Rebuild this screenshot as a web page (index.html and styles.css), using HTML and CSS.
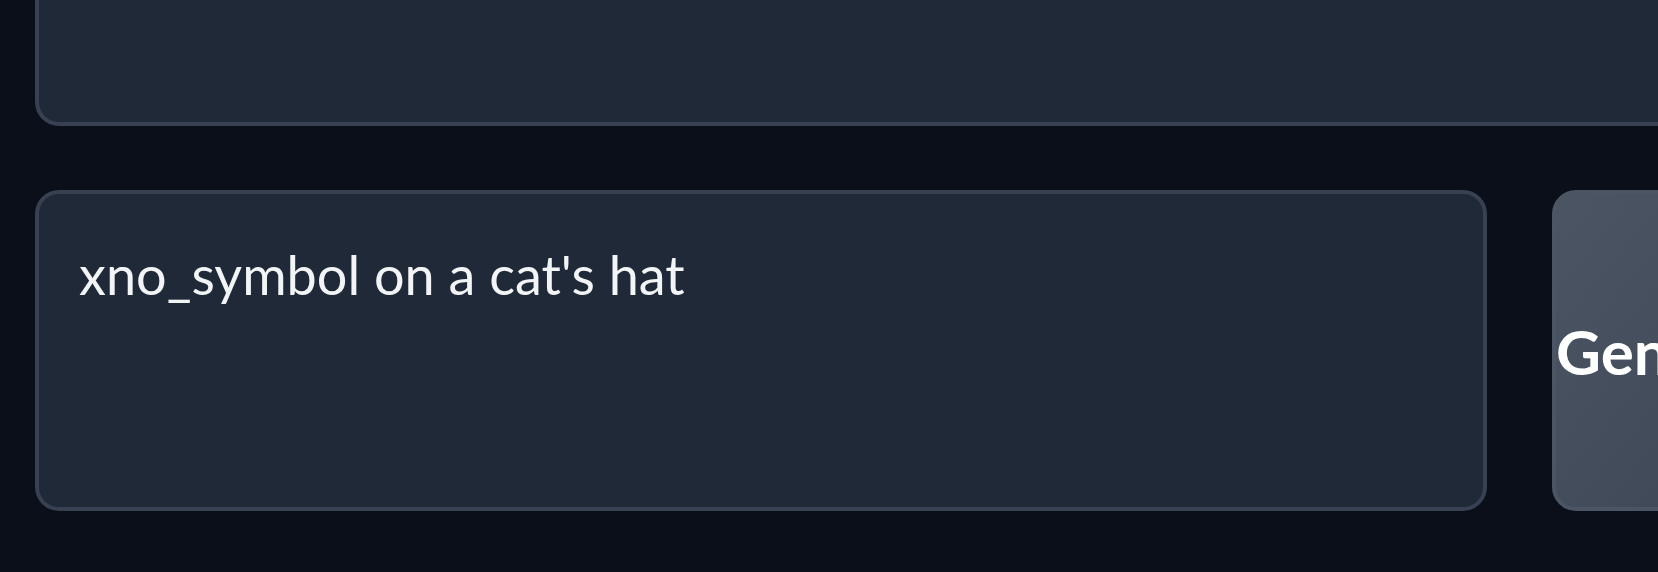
FILE: index.html
```html
<!DOCTYPE html>
<html lang="en">
<head>
    <meta charset="UTF-8">
    <title>prompt</title>
    <link rel="stylesheet" href="styles.css">
</head>
<body>
<div class="app">
    <div class="panel"></div>
    <div class="prompt-row">
        <div class="prompt-box">
            <textarea class="prompt-input" rows="3">xno_symbol on a cat's hat</textarea>
        </div>
        <button class="btn-generate">Generate</button>
    </div>
</div>
</body>
</html>
```

FILE: styles.css
```css
body{
    margin:0;
    padding:0;
    background:#0b0f19;
    font-family: Lato, "Noto Sans", sans-serif;
    overflow: hidden;
}

.app{
    width:1800px;
    padding-left:35px;
    display:flex;
    flex-direction:column;
    gap:64px;
}

.panel{
    height:122px;
    background:#1f2937;
    border:4px solid #374151;
    border-top:none;
    border-radius:0 0 24px 24px;
}

.prompt-row{
    display:flex;
    gap:65px;
    height:321px;
}

.prompt-box{
    width:1452px;
    box-sizing:border-box;
    background:#1f2937;
    border:4px solid #374151;
    border-radius:24px;
    padding:43px 40px 30px;
}

.prompt-input{
    display:block;
    width:100%;
    height:100%;
    margin:0;
    padding:0;
    border:none;
    outline:none;
    resize:none;
    background:transparent;
    color:#f3f4f6;
    font-family: Lato, "Noto Sans", sans-serif;
    font-size:54px;
    line-height:1.4;
}

.btn-generate{
    flex:none;
    box-sizing:border-box;
    padding:0;
    background:linear-gradient(to bottom right, #4b5563, #3d4553);
    border:4px solid #4b5563;
    border-radius:24px;
    color:#fff;
    font-family: Lato, "Noto Sans", sans-serif;
    font-weight:700;
    font-size:62px;
}
```
